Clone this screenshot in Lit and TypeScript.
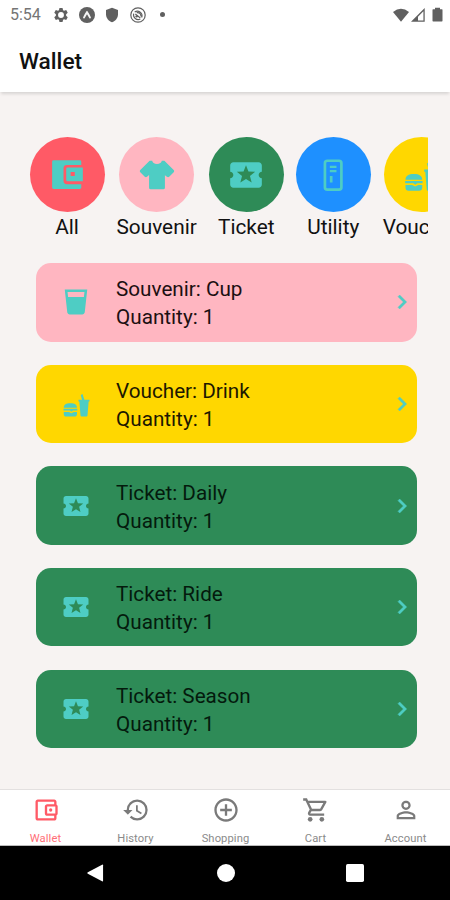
import { LitElement, html, css, svg } from "lit";
import { customElement, property } from "lit/decorators.js";

const icons: Record<string, unknown> = {
  all: svg`<path d="M3.500 2.700h16.600q.9 0 .9.900v2.100H12q-2.200 0-2.200 2.200v7.800q0 2.200 2.200 2.200h9v2q0 .9-.9.900H3.500q-.9 0-.9-.9V3.600q0-.9.900-.9z"/><path fill-rule="evenodd" d="M12.300 7.300H22v8.600h-9.700q-.8 0-.8-.8v-7q0-.8.8-.8zm2 2.800v2.600h2.600v-2.600z"/>`,
  shirt: svg`<path d="M16 21H8a1 1 0 0 1-1-1v-7.930l-1.300 1c-.39.39-1.020.39-1.410 0L1.460 10.290c-.39-.39-.39-1.020 0-1.410L7.340 3H9c0 1.100 1.340 2 3 2s3-.9 3-2h1.660l5.880 5.880c.39.39.39 1.020 0 1.410l-2.830 2.830c-.39.38-1.020.38-1.410 0l-1.300-1V20a1 1 0 0 1-1 1"/>`,
  ticket: svg`<path d="M20 12c0-1.100.9-2 2-2V6c0-1.100-.9-2-2-2H4c-1.100 0-1.990.9-1.990 2v4c1.100 0 1.990.9 1.990 2s-.89 2-2 2v4c0 1.100.9 2 2 2h16c1.100 0 2-.9 2-2v-4c-1.100 0-2-.9-2-2zm-4.420 4.800L12 14.500l-3.580 2.300 1.080-4.120-3.290-2.690 4.240-.25L12 5.800l1.540 3.950 4.240.25-3.290 2.690 1.090 4.110z"/>`,
  utility: svg`<rect x="6.900" y="3" width="10.400" height="18.200" rx="1.500" fill="none" stroke="currentColor" stroke-width="1.700"/><path d="M10 6.200h4.200v1.300H10zM10 8.900h4.200v1.300H10zM10 12.600h1.700v4.200H10z"/>`,
  food: svg`<path d="M2.200 15c0-2.600 1.900-3.700 5.300-3.700s5.300 1.100 5.300 3.700zM2 15.800h11v1.400H9.600l-1.200.9-1.200-.9H2zM2.200 18.300h4.200l1.900 1 1.900-1h2.600v1.600c0 1.300-.8 2.100-2 2.100H4.200c-1.200 0-2-.8-2-2.100zM14 8.500h2.800l-1-3.700 1.400-.9 1.500 4.600H22.800v1.500h-.7L21.200 21.200q-.1.800-.8.800h-4q-.7 0-.8-.8L14.700 10H14z"/>`,
  cup: svg`<path d="M18.320 8H5.670l-.44-4h13.540M3 2l2 18.230C5.130 21.230 5.970 22 7 22h10c1 0 1.870-.77 2-1.770L21 2z"/>`,
  chevron: svg`<path d="M10 6 8.590 7.410 13.170 12l-4.580 4.590L10 18l6-6z" stroke="currentColor" stroke-width=".4"/>`,
  wallet: svg`<path d="M21 7.280V5c0-1.100-.9-2-2-2H5c-1.110 0-2 .9-2 2v14c0 1.100.89 2 2 2h14c1.100 0 2-.9 2-2v-2.280c.59-.35 1-.98 1-1.690V9c0-.71-.41-1.340-1-1.720zM20 9v6h-7V9h7zM5 19V5h14v2h-6c-1.100 0-2 .9-2 2v6c0 1.100.9 2 2 2h6v2H5z"/><circle cx="16" cy="12" r="1.400"/>`,
  history: svg`<path d="M13 3a9 9 0 0 0-9 9H1l3.890 3.890.07.14L9 12H6c0-3.870 3.130-7 7-7s7 3.130 7 7-3.130 7-7 7c-1.930 0-3.680-.79-4.940-2.060l-1.420 1.420A8.954 8.954 0 0 0 13 21a9 9 0 0 0 0-18zm-1 5v5l4.280 2.540.72-1.210-3.500-2.080V8H12z"/>`,
  add: svg`<path d="M13 7h-2v4H7v2h4v4h2v-4h4v-2h-4V7zm-1-5C6.480 2 2 6.480 2 12s4.480 10 10 10 10-4.480 10-10S17.520 2 12 2zm0 18c-4.410 0-8-3.590-8-8s3.590-8 8-8 8 3.590 8 8-3.590 8-8 8z"/>`,
  cart: svg`<path d="M15.550 13c.75 0 1.410-.41 1.750-1.030l3.580-6.490A.996.996 0 0 0 20.010 4H5.210l-.94-2H1v2h2l3.600 7.590-1.350 2.440C4.520 15.370 5.480 17 7 17h12v-2H7l1.100-2h7.450zM6.160 6h12.150l-2.760 5H8.530L6.160 6z"/><circle cx="7" cy="20" r="2"/><circle cx="17" cy="20" r="2"/>`,
  account: svg`<path d="M12 5.900a2.100 2.100 0 1 1 0 4.200 2.100 2.100 0 0 1 0-4.200m0 9c2.970 0 6.100 1.460 6.100 2.100v1.100H5.900V17c0-.64 3.130-2.100 6.100-2.100M12 4C9.790 4 8 5.790 8 8s1.790 4 4 4 4-1.790 4-4-1.790-4-4-4zm0 9c-2.670 0-8 1.340-8 4v3h16v-3c0-2.660-5.330-4-8-4z"/>`,
  gear: svg`<path fill-rule="evenodd" d="M9.700 1.500h4.600l.8 3.200 1.500.9 3.200-1 2.300 4-2.400 2.300v2.200l2.400 2.300-2.300 4-3.200-1-1.500.9-.8 3.200H9.700l-.8-3.200-1.500-.9-3.200 1-2.300-4 2.400-2.300v-2.200L1.900 8.600l2.300-4 3.200 1 1.500-.9zM12 7.600a4.400 4.400 0 1 0 0 8.800 4.400 4.400 0 0 0 0-8.800z"/>`,
  expo: svg`<circle cx="12" cy="12" r="12"/><path d="M11.200 6.300q.8-1 1.600 0 3.300 4.800 5.200 9.300-.7 2.200-2.400 1.200L12 10.900l-3.600 5.900q-1.700 1-2.400-1.200 1.900-4.500 5.200-9.300z" fill="#f4f4f4"/>`,
  shield: svg`<path d="M12 1 3 4.500V11c0 5.500 3.800 10.300 9 12 5.200-1.700 9-6.500 9-12V4.500z"/>`,
  sync: svg`<circle cx="12" cy="12" r="10.800" fill="none" stroke="currentColor" stroke-width="1.800"/><path d="M7 7.500a7 7 0 0 1 10.500 8.300M15.500 18A7 7 0 0 1 5.500 10M10 8.500q6-1 6.500 5.500M8 10.500l7.500 6" fill="none" stroke="currentColor" stroke-width="1.700"/><circle cx="10" cy="14" r="1.800"/>`,
  wifi: svg`<path d="M0 7.500Q12-2.500 24 7.500L12 22z"/>`,
  signal: svg`<path fill-rule="evenodd" d="M0 23.500 23.500 0v23.500zM12 14.800v6.500h9.300V5.500z"/>`,
  battery: svg`<path d="M8 1h8v2.500h3q1 0 1 1V22q0 1-1 1H5q-1 0-1-1V4.500q0-1 1-1h3z"/>`,
  back: svg`<path d="M20.500 2.800v18.400q0 1.300-1.200.7L2.200 13q-1.500-1 0-2L19.300 2.100q1.200-.6 1.200.7z"/>`,
  home: svg`<circle cx="12" cy="12" r="10.800"/>`,
  recent: svg`<rect x="1.200" y="1.200" width="21.600" height="21.600" rx="2"/>`,
};

@customElement("ui-icon")
class UiIcon extends LitElement {
  @property() name = "";
  static styles = css`
    :host { display: block; flex: none; width: 24px; height: 24px; }
    svg { display: block; width: 100%; height: 100%; fill: currentColor; overflow: visible; }
  `;
  render() {
    return html`<svg viewBox="0 0 24 24" aria-hidden="true">${icons[this.name]}</svg>`;
  }
}

const categories = [
  ["All", "all", "red"],
  ["Souvenir", "shirt", "pink"],
  ["Ticket", "ticket", "green"],
  ["Utility", "utility", "blue"],
  ["Voucher", "food", "gold"],
];
const items = [
  ["Souvenir: Cup", "cup", "pink"],
  ["Voucher: Drink", "food", "gold"],
  ["Ticket: Daily", "ticket", "green"],
  ["Ticket: Ride", "ticket", "green"],
  ["Ticket: Season", "ticket", "green"],
];
const tabs = [
  ["Wallet", "wallet"],
  ["History", "history"],
  ["Shopping", "add"],
  ["Cart", "cart"],
  ["Account", "account"],
];

@customElement("app-root")
class AppRoot extends LitElement {
  static styles = css`
    :host {
      display: flex; flex-direction: column; width: 450px; height: 900px;
      overflow: hidden; background: #f7f3f2; color: #111;
      font-family: Roboto, "Liberation Sans", sans-serif;
    }
    * { box-sizing: border-box; }
    .status {
      flex: none; display: flex; align-items: center; height: 29px; padding: 0 6px 0 10px;
      background: #fff; color: #606060; font-size: 16px;
    }
    .time { width: 43px; color: #757575; }
    .status ui-icon { width: 16px; height: 16px; }
    .notes { display: flex; align-items: center; gap: 9.500px; }
    .dot { width: 5px; height: 5px; margin-left: 5px; border-radius: 50%; background: #606060; }
    .system { display: flex; align-items: center; margin-left: auto; }
    .system .signal { width: 14px; height: 14px; margin: 1px 5px 0 2px; }
    .system .battery { width: 15px; height: 15px; margin-right: -1px; }
    .bar {
      flex: none; height: 63px; padding: 19px 19px 0; background: #fff;
      box-shadow: 0 3px 3px -1px rgba(0, 0, 0, 0.13);
      font-size: 22.700px; line-height: 27px; font-weight: 500; color: #111;
    }
    .main { flex: 1; min-height: 0; padding: 45px 22px 0; }
    .chips { display: flex; gap: 12px; padding-left: 7.500px; overflow: hidden; height: 110px; }
    .chip { flex: none; display: flex; flex-direction: column; align-items: center; min-width: 75px; }
    .disc {
      display: flex; align-items: center; justify-content: center;
      width: 75px; height: 75px; border-radius: 50%; color: #4ecdc4;
    }
    .disc ui-icon { width: 38px; height: 38px; }
    .label { margin-top: 1px; font-size: 20.800px; line-height: 28px; white-space: nowrap; }
    .red { background: #ff5a66; }
    .pink { background: #ffb6c1; }
    .green { background: #2e8b57; }
    .blue { background: #1e90ff; }
    .gold { background: #ffd700; }
    .list { display: flex; flex-direction: column; gap: 23.100px; padding: 16.200px 11.500px 0 14px; }
    .card {
      display: flex; align-items: center; height: 78.500px; padding: 0 0 0 25px;
      border-radius: 15px;
    }
    .card ui-icon { width: 30px; height: 30px; color: #4ecdc4; }
    .lines { flex: 1; padding: 2px 0 0 25px; font-size: 20.700px; line-height: 28px; color: #1c1012; }
    .lines.gold { color: #1c1800; }
    .lines.green { color: #041a0d; }
    .card .go { width: 28px; height: 28px; margin-right: .5px; }
    .tabs {
      flex: none; display: flex; height: 57px; background: #fff;
      border-top: 1px solid #e3e0e0; border-bottom: 1px solid #bbb;
    }
    .tab {
      flex: 1; display: flex; flex-direction: column; align-items: center;
      padding: 6px 0 0 1px; color: #7a7a7a; font-size: 11.200px; line-height: 14px;
      letter-spacing: 0.1px;
    }
    .tab span { opacity: 0.88; }
    .tab ui-icon { width: 28px; height: 28px; margin-bottom: 8px; }
    .tab.active { color: #ff5a66; }
    .system-nav {
      flex: none; display: flex; align-items: center; justify-content: center; gap: 109.500px;
      height: 54px; padding-left: 1px; background: #000; color: #fff;
    }
    .system-nav ui-icon { width: 20px; height: 20px; }
  `;

  render() {
    return html`
      <div class="status">
        <span class="time">5:54</span>
        <div class="notes">
          <ui-icon name="gear"></ui-icon><ui-icon name="expo"></ui-icon>
          <ui-icon name="shield"></ui-icon><ui-icon name="sync"></ui-icon>
          <span class="dot"></span>
        </div>
        <div class="system">
          <ui-icon name="wifi"></ui-icon>
          <ui-icon class="signal" name="signal"></ui-icon>
          <ui-icon class="battery" name="battery"></ui-icon>
        </div>
      </div>
      <header class="bar">Wallet</header>
      <main class="main">
        <div class="chips">
          ${categories.map(
            ([label, icon, tone]) => html`<div class="chip">
              <div class="disc ${tone}"><ui-icon name=${icon}></ui-icon></div>
              <span class="label">${label}</span>
            </div>`
          )}
        </div>
        <div class="list">
          ${items.map(
            ([title, icon, tone]) => html`<div class="card ${tone}">
              <ui-icon name=${icon}></ui-icon>
              <div class="lines ${tone}"><div>${title}</div><div>Quantity: 1</div></div>
              <ui-icon class="go" name="chevron"></ui-icon>
            </div>`
          )}
        </div>
      </main>
      <nav class="tabs">
        ${tabs.map(
          ([label, icon], i) => html`<div class="tab ${i === 0 ? "active" : ""}">
            <ui-icon name=${icon}></ui-icon><span>${label}</span>
          </div>`
        )}
      </nav>
      <div class="system-nav">
        <ui-icon name="back"></ui-icon><ui-icon name="home"></ui-icon><ui-icon name="recent"></ui-icon>
      </div>
    `;
  }
}
